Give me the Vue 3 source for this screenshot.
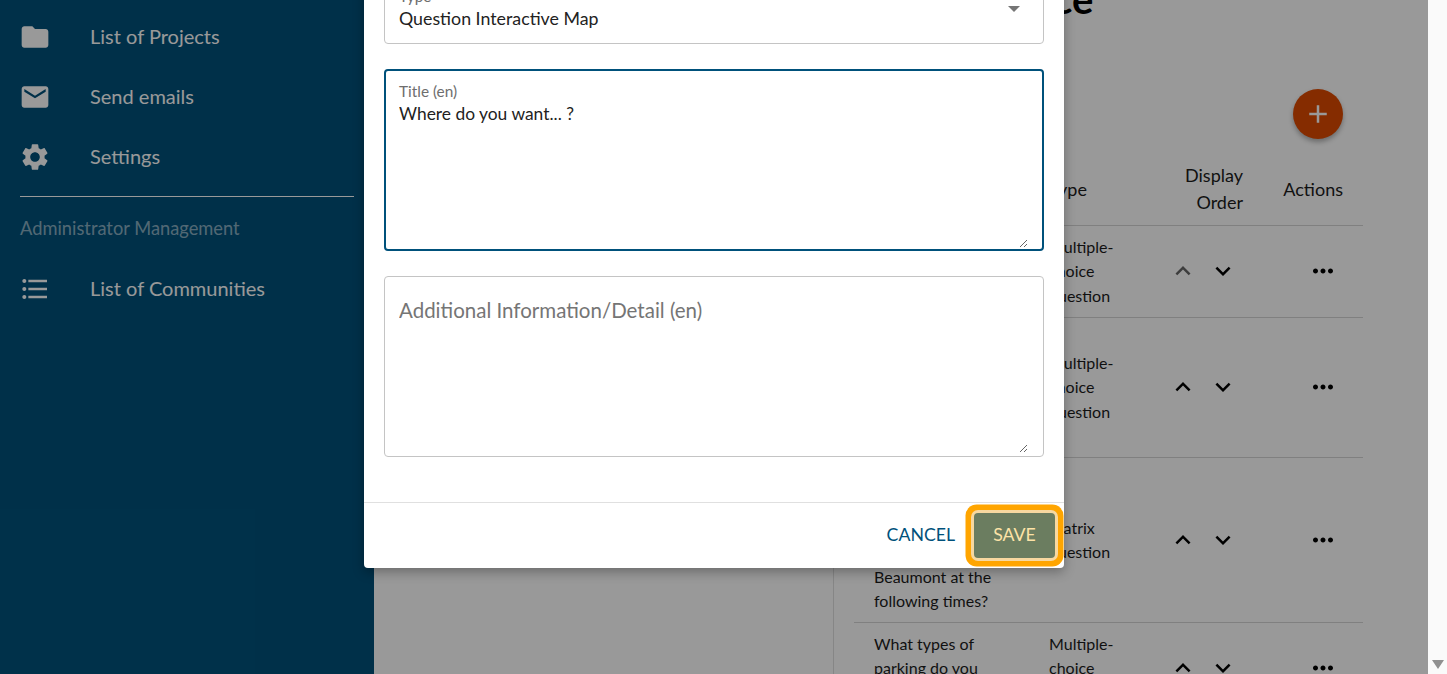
<template>
  <div class="page">
    <div class="shell">
      <aside class="sidebar">
        <a v-for="item in mainNav" :key="item.label" class="nav-item">
          <svg class="nav-icon" viewBox="0 0 24 24"><path :d="item.icon" /></svg>
          <span>{{ item.label }}</span>
        </a>
        <hr class="nav-divider" />
        <div class="nav-heading">Administrator Management</div>
        <a class="nav-item">
          <svg class="nav-icon" viewBox="0 0 24 24"><path :d="icons.list" /></svg>
          <span>List of Communities</span>
        </a>
      </aside>

      <main class="content">
        <div class="content-left"></div>
        <section class="panel">
          <h1 class="panel-title">Experience</h1>
          <div class="panel-tools">
            <button class="fab">
              <svg viewBox="0 0 24 24"><path d="M19 13h-6v6h-2v-6H5v-2h6V5h2v6h6v2z" /></svg>
            </button>
          </div>
          <table class="questions">
            <colgroup>
              <col class="col-title" />
              <col class="col-type" />
              <col class="col-order" />
              <col class="col-actions" />
            </colgroup>
            <thead>
              <tr>
                <th>Title</th>
                <th>Type</th>
                <th class="right">Display Order</th>
                <th class="right">Actions</th>
              </tr>
            </thead>
            <tbody>
              <tr v-for="(row, i) in rows" :key="i">
                <td>{{ row.title }}</td>
                <td>{{ row.type }}</td>
                <td class="order">
                  <button class="icon-btn" :class="{ disabled: i === 0 }">
                    <svg viewBox="0 0 24 24"><path :d="icons.up" /></svg>
                  </button>
                  <button class="icon-btn">
                    <svg viewBox="0 0 24 24"><path :d="icons.down" /></svg>
                  </button>
                </td>
                <td class="row-actions">
                  <button class="icon-btn">
                    <svg viewBox="0 0 24 24"><path :d="icons.more" /></svg>
                  </button>
                </td>
              </tr>
            </tbody>
          </table>
        </section>
      </main>

      <div class="overlay"></div>

      <div class="dialog">
        <div class="dialog-body">
          <div class="field select-field">
            <label>Type</label>
            <div class="select-value">Question Interactive Map</div>
            <span class="select-arrow"></span>
          </div>
          <div class="field focused">
            <label>Title (en)</label>
            <textarea v-model="title"></textarea>
          </div>
          <div class="field">
            <textarea class="detail" placeholder="Additional Information/Detail (en)"></textarea>
          </div>
        </div>
        <div class="dialog-footer">
          <button class="btn-cancel">CANCEL</button>
          <button class="btn-save">SAVE</button>
        </div>
      </div>
    </div>

    <div class="scrollbar">
      <span class="scroll-arrow"></span>
    </div>
  </div>
</template>

<script setup>
import { ref } from 'vue'

const icons = {
  folder: 'M10 4H4c-1.1 0-1.99.9-1.99 2L2 18c0 1.1.9 2 2 2h16c1.1 0 2-.9 2-2V8c0-1.1-.9-2-2-2h-8l-2-2z',
  mail: 'M20 4H4c-1.1 0-1.99.9-1.99 2L2 18c0 1.1.9 2 2 2h16c1.1 0 2-.9 2-2V6c0-1.1-.9-2-2-2zm0 4l-8 5-8-5V6l8 5 8-5v2z',
  gear: 'M19.14 12.94c.04-.3.06-.61.06-.94 0-.32-.02-.64-.07-.94l2.03-1.58c.18-.14.23-.41.12-.61l-1.92-3.32c-.12-.22-.37-.29-.59-.22l-2.39.96c-.5-.38-1.03-.7-1.62-.94l-.36-2.54c-.04-.24-.24-.41-.48-.41h-3.84c-.24 0-.43.17-.47.41l-.36 2.54c-.59.24-1.13.57-1.62.94l-2.39-.96c-.22-.08-.47 0-.59.22L2.74 8.87c-.12.21-.08.47.12.61l2.03 1.58c-.05.3-.09.63-.09.94s.02.64.07.94l-2.03 1.58c-.18.14-.23.41-.12.61l1.92 3.32c.12.22.37.29.59.22l2.39-.96c.5.38 1.03.7 1.62.94l.36 2.54c.05.24.24.41.48.41h3.84c.24 0 .44-.17.47-.41l.36-2.54c.59-.24 1.13-.56 1.62-.94l2.39.96c.22.08.47 0 .59-.22l1.92-3.32c.12-.22.07-.47-.12-.61l-2.01-1.58zM12 15.6c-1.98 0-3.6-1.62-3.6-3.6s1.62-3.6 3.6-3.6 3.6 1.62 3.6 3.6-1.62 3.6-3.6 3.6z',
  list: 'M4 10.5c-.83 0-1.5.67-1.5 1.5s.67 1.5 1.5 1.5 1.5-.67 1.5-1.5-.67-1.5-1.5-1.5zm0-6c-.83 0-1.5.67-1.5 1.5S3.17 7.5 4 7.5 5.5 6.83 5.5 6 4.83 4.5 4 4.5zm0 12c-.83 0-1.5.68-1.5 1.5s.68 1.5 1.5 1.5 1.5-.68 1.5-1.5-.67-1.5-1.5-1.5zM7 19h14v-2H7v2zm0-6h14v-2H7v2zm0-8v2h14V5H7z',
  up: 'M12 8l-6 6 1.41 1.41L12 10.83l4.59 4.58L18 14z',
  down: 'M16.59 8.59L12 13.17 7.41 8.59 6 10l6 6 6-6z',
  more: 'M6 10c-1.1 0-2 .9-2 2s.9 2 2 2 2-.9 2-2-.9-2-2-2zm12 0c-1.1 0-2 .9-2 2s.9 2 2 2 2-.9 2-2-.9-2-2-2zm-6 0c-1.1 0-2 .9-2 2s.9 2 2 2 2-.9 2-2-.9-2-2-2z'
}

const mainNav = [
  { label: 'List of Projects', icon: icons.folder },
  { label: 'Send emails', icon: icons.mail },
  { label: 'Settings', icon: icons.gear }
]

const title = ref('Where do you want... ?')

const rows = [
  { title: 'How do you get to downtown most often?', type: 'Multiple-choice question' },
  { title: 'Why do you usually come to downtown Beaumont on most of your trips?', type: 'Multiple-choice question' },
  { title: 'How satisfied are you with the parking in downtown Beaumont at the following times?', type: 'Matrix question' },
  { title: 'What types of parking do you use?', type: 'Multiple-choice question' }
]
</script>

<style>
html, body {
  margin: 0;
  height: 100%;
  overflow: hidden;
}
</style>

<style scoped>
.page {
  display: flex;
  width: 1447px;
  height: 674px;
  overflow: hidden;
  font-family: Lato, "Open Sans", sans-serif;
  color: #1c1c1c;
}

.shell {
  position: relative;
  flex: 1;
  display: flex;
  overflow: hidden;
  background: #fff;
}

.sidebar {
  width: 374px;
  flex-shrink: 0;
  box-sizing: border-box;
  padding-top: 6px;
  background: #00517b;
  color: #fff;
}

.nav-item {
  display: flex;
  align-items: center;
  height: 60px;
  padding-left: 19px;
  font-size: 20px;
}

.nav-icon {
  width: 32px;
  height: 32px;
  margin-top: 2px;
  margin-right: 39px;
  fill: #fff;
}

.nav-divider {
  margin: 10px 20px 0;
  border: none;
  border-top: 1px solid #fff;
}

.nav-heading {
  padding: 20px 20px 0;
  margin-bottom: 19px;
  font-size: 18.3px;
  line-height: 22px;
  color: rgba(255, 255, 255, 0.55);
}

.content {
  flex: 1;
  display: flex;
  min-width: 0;
}

.content-left {
  width: 459px;
  flex-shrink: 0;
}

.panel {
  flex: 1;
  min-width: 0;
  box-sizing: border-box;
  padding: 0 65px 0 20px;
  border-left: 1px solid #e0e0e0;
  margin-top: -26px;
}

.panel-title {
  margin: 0 0 0 42px;
  font-size: 40px;
  line-height: 50px;
  font-weight: 700;
  color: #000;
  white-space: nowrap;
}

.panel-tools {
  display: flex;
  justify-content: flex-end;
  padding: 65px 20px 0 0;
}

.fab {
  display: flex;
  align-items: center;
  justify-content: center;
  width: 50px;
  height: 50px;
  padding: 0;
  border: none;
  border-radius: 50%;
  background: #de4a00;
  box-shadow: 0 3px 5px rgba(0, 0, 0, 0.3);
}

.fab svg {
  width: 30px;
  height: 30px;
  fill: #fff;
}

.questions {
  width: 509px;
  margin-top: 14px;
  border-collapse: collapse;
  table-layout: fixed;
  font-size: 16px;
  line-height: 24.5px;
}

.col-title { width: 175px; }
.col-type { width: 134px; }
.col-order { width: 100px; }
.col-actions { width: 100px; }

.questions th {
  padding: 9px 20px;
  font-size: 18px;
  line-height: 27px;
  font-weight: 400;
  text-align: left;
  border-bottom: 1px solid #d5d5d5;
}

.questions td {
  padding: 8.5px 20px;
  border-bottom: 1px solid #d5d5d5;
  vertical-align: middle;
}

.questions th.right {
  text-align: right;
}

.questions th:nth-child(3) {
  padding-left: 10px;
}

.questions td.order {
  padding-left: 0;
  padding-right: 20px;
  white-space: nowrap;
  text-align: right;
}

.questions td.row-actions {
  padding-left: 0;
  text-align: right;
}

.icon-btn {
  display: inline-flex;
  align-items: center;
  justify-content: center;
  width: 40px;
  height: 40px;
  padding: 0;
  border: none;
  background: none;
  vertical-align: middle;
}

.icon-btn svg {
  width: 30px;
  height: 30px;
  fill: #000;
}

.icon-btn.disabled svg {
  fill: rgba(0, 0, 0, 0.6);
}

.overlay {
  position: absolute;
  inset: 0;
  background: rgba(0, 0, 0, 0.4);
}

.dialog {
  position: absolute;
  left: 364px;
  bottom: 106px;
  width: 700px;
  background: #fff;
  border-radius: 4px;
  box-shadow: 0 4px 12px rgba(0, 0, 0, 0.3);
}

.dialog-body {
  display: flex;
  flex-direction: column;
  gap: 25px;
  padding: 20px 20px 45px;
}

.field {
  position: relative;
  display: flex;
  flex-direction: column;
  box-sizing: border-box;
  border: 1px solid #c4c4c4;
  border-radius: 4px;
  padding: 0 15px 0 14px;
  font-size: 17.8px;
  color: #222;
}

.field label {
  margin-top: 13px;
  font-size: 15.4px;
  line-height: 16px;
  color: #6e6e6e;
}

.field textarea {
  display: block;
  box-sizing: border-box;
  width: 100%;
  padding: 0;
  border: none;
  outline: none;
  background: transparent;
  font: inherit;
  line-height: 27px;
  color: #222;
}

.field.focused {
  height: 182px;
  padding: 0 14px 0 13px;
  border: 2px solid #00517b;
}

.field.focused label {
  margin-top: 12px;
}

.field.focused textarea {
  height: 148px;
  margin-top: 1px;
  font-size: 17.4px;
}

.field textarea.detail {
  height: 156px;
  margin-top: 20px;
  margin-bottom: 3px;
  font-size: 20.5px;
}

.field textarea.detail::placeholder {
  color: #757575;
  opacity: 1;
}

.select-field {
  padding-bottom: 11px;
}

.select-value {
  line-height: 27px;
  margin-top: 1px;
}

.select-arrow {
  position: absolute;
  right: 23px;
  bottom: 31px;
  border-left: 6px solid transparent;
  border-right: 6px solid transparent;
  border-top: 6px solid #757575;
}

.dialog-footer {
  display: flex;
  align-items: center;
  justify-content: flex-end;
  gap: 19px;
  height: 65px;
  padding-right: 9px;
  border-top: 1px solid #e0e0e0;
}

.btn-cancel,
.btn-save {
  box-sizing: border-box;
  font-family: inherit;
  font-size: 17.7px;
  border: none;
  padding: 0 0 3px;
}

.btn-cancel {
  background: none;
  color: #00517b;
}

.btn-save {
  width: 81px;
  height: 45px;
  border-radius: 4px;
  background: #6b7d60;
  color: #fde3a7;
  box-shadow: 0 0 0 3px #f7d8a0, 0 0 0 8.5px #ffa500;
}

.scrollbar {
  position: relative;
  width: 19px;
  flex-shrink: 0;
  background: #fafafa;
}

.scroll-arrow {
  position: absolute;
  left: 4px;
  bottom: 5px;
  border-left: 6px solid transparent;
  border-right: 6px solid transparent;
  border-top: 9px solid #909090;
}
</style>
